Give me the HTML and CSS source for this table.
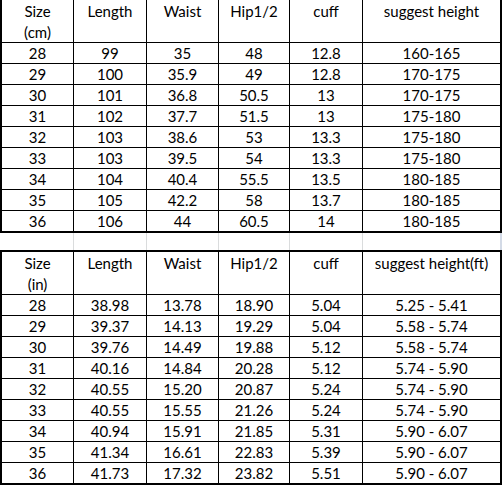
FILE: index.html
```html
<!DOCTYPE html>
<html>
<head>
<meta charset="utf-8">
<link rel="stylesheet" href="styles.css">
</head>
<body>
<div class="page">
  <div class="sheet sheet-cm">
    <div class="cell head">Size<br>(cm)</div>
    <div class="cell head">Length</div>
    <div class="cell head">Waist</div>
    <div class="cell head">Hip1/2</div>
    <div class="cell head">cuff</div>
    <div class="cell head">suggest height</div>

    <div class="cell">28</div><div class="cell">99</div><div class="cell">35</div><div class="cell">48</div><div class="cell">12.8</div><div class="cell">160-165</div>
    <div class="cell">29</div><div class="cell">100</div><div class="cell">35.9</div><div class="cell">49</div><div class="cell">12.8</div><div class="cell">170-175</div>
    <div class="cell">30</div><div class="cell">101</div><div class="cell">36.8</div><div class="cell">50.5</div><div class="cell">13</div><div class="cell">170-175</div>
    <div class="cell">31</div><div class="cell">102</div><div class="cell">37.7</div><div class="cell">51.5</div><div class="cell">13</div><div class="cell">175-180</div>
    <div class="cell">32</div><div class="cell">103</div><div class="cell">38.6</div><div class="cell">53</div><div class="cell">13.3</div><div class="cell">175-180</div>
    <div class="cell">33</div><div class="cell">103</div><div class="cell">39.5</div><div class="cell">54</div><div class="cell">13.3</div><div class="cell">175-180</div>
    <div class="cell">34</div><div class="cell">104</div><div class="cell">40.4</div><div class="cell">55.5</div><div class="cell">13.5</div><div class="cell">180-185</div>
    <div class="cell">35</div><div class="cell">105</div><div class="cell">42.2</div><div class="cell">58</div><div class="cell">13.7</div><div class="cell">180-185</div>
    <div class="cell">36</div><div class="cell">106</div><div class="cell">44</div><div class="cell">60.5</div><div class="cell">14</div><div class="cell">180-185</div>
  </div>

  <div class="spacer">
    <div class="blank"></div><div class="blank"></div><div class="blank"></div><div class="blank"></div><div class="blank"></div><div class="blank"></div>
  </div>

  <div class="sheet sheet-in">
    <div class="cell head">Size<br>(in)</div>
    <div class="cell head">Length</div>
    <div class="cell head">Waist</div>
    <div class="cell head">Hip1/2</div>
    <div class="cell head">cuff</div>
    <div class="cell head">suggest height(ft)</div>

    <div class="cell">28</div><div class="cell">38.98</div><div class="cell">13.78</div><div class="cell">18.90</div><div class="cell">5.04</div><div class="cell">5.25 - 5.41</div>
    <div class="cell">29</div><div class="cell">39.37</div><div class="cell">14.13</div><div class="cell">19.29</div><div class="cell">5.04</div><div class="cell">5.58 - 5.74</div>
    <div class="cell">30</div><div class="cell">39.76</div><div class="cell">14.49</div><div class="cell">19.88</div><div class="cell">5.12</div><div class="cell">5.58 - 5.74</div>
    <div class="cell">31</div><div class="cell">40.16</div><div class="cell">14.84</div><div class="cell">20.28</div><div class="cell">5.12</div><div class="cell">5.74 - 5.90</div>
    <div class="cell">32</div><div class="cell">40.55</div><div class="cell">15.20</div><div class="cell">20.87</div><div class="cell">5.24</div><div class="cell">5.74 - 5.90</div>
    <div class="cell">33</div><div class="cell">40.55</div><div class="cell">15.55</div><div class="cell">21.26</div><div class="cell">5.24</div><div class="cell">5.74 - 5.90</div>
    <div class="cell">34</div><div class="cell">40.94</div><div class="cell">15.91</div><div class="cell">21.85</div><div class="cell">5.31</div><div class="cell">5.90 - 6.07</div>
    <div class="cell">35</div><div class="cell">41.34</div><div class="cell">16.61</div><div class="cell">22.83</div><div class="cell">5.39</div><div class="cell">5.90 - 6.07</div>
    <div class="cell">36</div><div class="cell">41.73</div><div class="cell">17.32</div><div class="cell">23.82</div><div class="cell">5.51</div><div class="cell">5.90 - 6.07</div>
  </div>
</div>
</body>
</html>
```

FILE: styles.css
```css
html, body {
  margin: 0;
  padding: 0;
  background: #fff;
}

.page {
  width: 502px;
  font-family: Lato, "Open Sans", sans-serif;
  font-size: 15px;
  color: #000;
}

.sheet {
  display: grid;
  grid-template-columns: 71px 72px 71px 70px 72px 137px;
  grid-template-rows: 42px repeat(9, 20px);
  gap: 1px;
  background: #000;
  border-left: 2px solid #000;
  border-right: 2px solid #000;
  border-bottom: 2px solid #000;
}

.sheet-in {
  border-top: 2px solid #000;
}

.cell {
  background: #fff;
  text-align: center;
  line-height: 20px;
  white-space: nowrap;
}

.head {
  padding-top: 1px;
  line-height: 21px;
}

.spacer {
  display: grid;
  grid-template-columns: 71px 72px 71px 70px 72px 137px;
  grid-template-rows: 17px;
  gap: 1px;
  background: #dadcdd;
  border-left: 2px solid #fff;
  border-right: 2px solid #d3dae6;
}

.blank {
  background: #fff;
}
```
